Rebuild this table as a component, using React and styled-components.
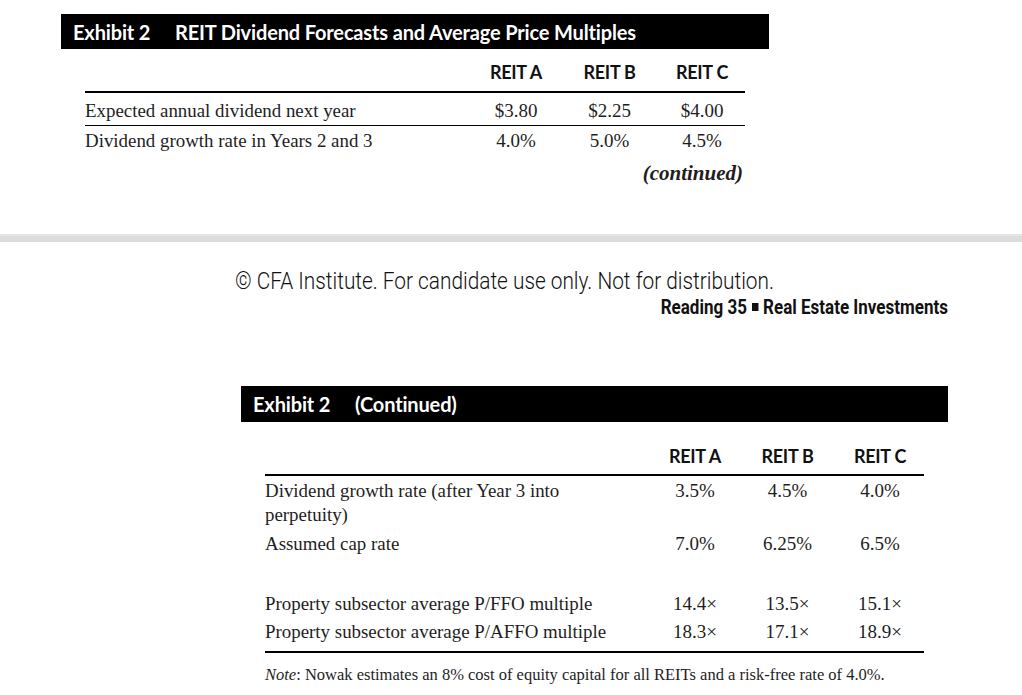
import React from "react";
import styled, { createGlobalStyle } from "styled-components";

const GlobalStyle = createGlobalStyle`
    html, body {
        margin: 0;
        padding: 0;
        background: #fff;
    }
    body {
        font-family: "Liberation Serif", "Times New Roman", serif;
        color: #1e1e1e;
    }
`;

const Page = styled.div`
    width: 1022px;
    height: 695px;
    overflow: hidden;
    padding-top: 14px;
    box-sizing: border-box;
`;

const Exhibit = styled.div`
    width: ${(p) => p.width}px;
    margin-left: ${(p) => p.left}px;
    margin-top: ${(p) => p.top || 0}px;
`;

const Bar = styled.div`
    display: flex;
    align-items: center;
    height: ${(p) => p.height}px;
    background: #000;
    color: #fff;
    font-family: Lato, "Open Sans", sans-serif;
    font-weight: 700;
    font-size: 20px;
    letter-spacing: -0.15px;
    padding-left: 12px;
`;

const BarLabel = styled.span`
    width: 102px;
    flex: none;
`;

const Table = styled.div`
    padding: 0 24px;
`;

const Row = styled.div`
    display: grid;
    grid-template-columns: ${(p) => p.cols};
    align-items: start;
    line-height: 24px;
    padding-top: ${(p) => p.pt || 0}px;
    padding-bottom: ${(p) => p.pb || 0}px;
    border-bottom: ${(p) => (p.rule ? `${p.rule}px solid #000` : "none")};
`;

const Head = styled.div`
    font-family: Lato, "Open Sans", sans-serif;
    font-weight: 700;
    font-size: 18px;
    text-align: center;
    color: #111;
    letter-spacing: -0.3px;
`;

const Label = styled.div`
    font-size: 18.9px;
    max-width: ${(p) => (p.narrow ? `${p.narrow}px` : "none")};
`;

const Value = styled.div`
    font-size: 19px;
    text-align: center;
`;

const Continued = styled.div`
    text-align: right;
    font-style: italic;
    font-weight: 700;
    font-size: 21px;
    line-height: 24px;
    padding-top: 8px;
    padding-right: 2px;
`;

const Band = styled.div`
    height: 8px;
    margin-top: 49px;
    background: #dcdcdc;
    border-top: 2px solid #e6e6e6;
    box-sizing: border-box;
`;

const Copyright = styled.div`
    margin-top: 27px;
    padding-left: 235px;
    font-family: Roboto, sans-serif;
    font-weight: 300;
    font-size: 23px;
    line-height: 26px;
    color: #111;
    white-space: nowrap;
    transform: scaleX(0.905);
    transform-origin: 235px 0;
`;

const Running = styled.div`
    width: 948px;
    text-align: right;
    font-family: Roboto, sans-serif;
    font-weight: 700;
    font-size: 21px;
    line-height: 24px;
    color: #111;
    white-space: nowrap;
    transform: scaleX(0.81);
    transform-origin: 948px 0;
`;

const Square = styled.span`
    display: inline-block;
    width: 8px;
    height: 8px;
    background: #111;
    margin: 0 6px;
    vertical-align: middle;
    position: relative;
    top: -1px;
`;

const Note = styled.div`
    font-size: 16.5px;
    line-height: 24px;
    padding-top: 10px;
    & em {
        font-style: italic;
    }
`;

const topCols = "386px 90px 97px 88px";
const bottomCols = "385px 90px 95px 90px";

const topRows = [
    { label: "Expected annual dividend next year", values: ["$3.80", "$2.25", "$4.00"], pt: 6, pb: 2, rule: 1 },
    { label: "Dividend growth rate in Years 2 and 3", values: ["4.0%", "5.0%", "4.5%"], pt: 3, pb: 0 },
];

const bottomRows = [
    { label: "Dividend growth rate (after Year 3 into perpetuity)", narrow: 320, values: ["3.5%", "4.5%", "4.0%"], pt: 3 },
    { label: "Assumed cap rate", values: ["7.0%", "6.25%", "6.5%"], pt: 5 },
    { label: "Property subsector average P/FFO multiple", values: ["14.4×", "13.5×", "15.1×"], pt: 36 },
    { label: "Property subsector average P/AFFO multiple", values: ["18.3×", "17.1×", "18.9×"], pt: 4, pb: 7, rule: 2 },
];

function HeadRow({ cols, pt, pb }) {
    return (
        <Row cols={cols} pt={pt} pb={pb} rule={2}>
            <div />
            <Head>REIT A</Head>
            <Head>REIT B</Head>
            <Head>REIT C</Head>
        </Row>
    );
}

function App() {
    return (
        <Page>
            <GlobalStyle />
            <Exhibit left={61} width={708}>
                <Bar height={35}>
                    <BarLabel>Exhibit 2</BarLabel>
                    <span>REIT Dividend Forecasts and Average Price Multiples</span>
                </Bar>
                <Table>
                    <HeadRow cols={topCols} pt={11} pb={7} />
                    {topRows.map((row) => (
                        <Row key={row.label} cols={topCols} pt={row.pt} pb={row.pb} rule={row.rule}>
                            <Label>{row.label}</Label>
                            {row.values.map((v, i) => (
                                <Value key={i}>{v}</Value>
                            ))}
                        </Row>
                    ))}
                    <Continued>(continued)</Continued>
                </Table>
            </Exhibit>

            <Band />

            <Copyright>© CFA Institute. For candidate use only. Not for distribution.</Copyright>
            <Running>
                Reading 35<Square />Real Estate Investments
            </Running>

            <Exhibit left={241} width={707} top={67}>
                <Bar height={36}>
                    <BarLabel>Exhibit 2</BarLabel>
                    <span>(Continued)</span>
                </Bar>
                <Table>
                    <HeadRow cols={bottomCols} pt={22} pb={6} />
                    {bottomRows.map((row) => (
                        <Row key={row.label} cols={bottomCols} pt={row.pt} pb={row.pb} rule={row.rule}>
                            <Label narrow={row.narrow}>{row.label}</Label>
                            {row.values.map((v, i) => (
                                <Value key={i}>{v}</Value>
                            ))}
                        </Row>
                    ))}
                    <Note>
                        <em>Note</em>: Nowak estimates an 8% cost of equity capital for all REITs and a risk-free rate of 4.0%.
                    </Note>
                </Table>
            </Exhibit>
        </Page>
    );
}

export default App;
